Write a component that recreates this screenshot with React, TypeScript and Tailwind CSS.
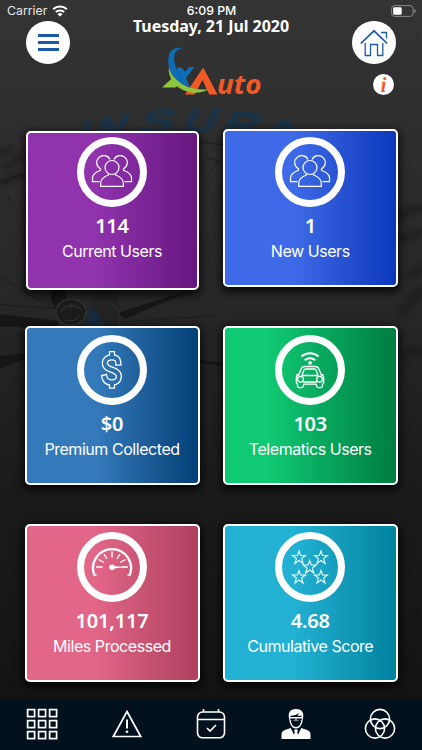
import type { ReactNode } from "react";

const LABEL = "font-['Inter','Liberation_Sans',sans-serif]";
const HUMANIST = "font-['Noto_Sans','Open_Sans',sans-serif]";

function Backdrop() {
  return (
    <svg className="absolute inset-0 h-full w-full" viewBox="0 0 422 750" aria-hidden="true">
      <defs>
        <linearGradient id="wall" x1="0" y1="0" x2="0" y2="1">
          <stop offset="0" stopColor="#343434" />
          <stop offset="0.12" stopColor="#303030" />
          <stop offset="0.4" stopColor="#272727" />
          <stop offset="0.65" stopColor="#1b1b1b" />
          <stop offset="1" stopColor="#111111" />
        </linearGradient>
        <filter id="soft"><feGaussianBlur stdDeviation="0.6" /></filter>
        <filter id="softer"><feGaussianBlur stdDeviation="2.5" /></filter>
      </defs>
      <rect width="422" height="750" fill="url(#wall)" />
      <g fill="#1f3245" stroke="#1f3245" strokeWidth="1.6" fontFamily="Liberation Sans, sans-serif" fontWeight="700" fontSize="34" filter="url(#soft)">
        <text transform="translate(77 147) rotate(-12) skewX(-28)">I</text>
        <text transform="translate(92 143) rotate(-8) skewX(-28) scale(1.25 1)">N</text>
        <text transform="translate(137 134) rotate(-4) skewX(-24) scale(1.5 .95)">S</text>
        <text transform="translate(180 133) rotate(-1) skewX(-24) scale(1.35 1)">U</text>
        <text transform="translate(219 135) rotate(4) skewX(-24) scale(1.4 1.05)">R</text>
        <text transform="translate(260 137) rotate(8) skewX(-20) scale(1.35 .85)">A</text>
        <text transform="translate(313 149) rotate(12) skewX(-18)">I</text>
      </g>
      <g filter="url(#softer)" fill="none" stroke="#191919" strokeWidth="6" opacity=".6">
        <path d="M-4 155L12 148M3 169l20-14M0 185q10-8 25-10" />
        <path d="M398 220q10-14 26-9M401 240l22-9M410 278l12-12M400 315l22-27M400 358q10-12 24-6" />
      </g>
      <g stroke="#1a1a1a" strokeWidth=".8" fill="none" filter="url(#soft)">
        <path d="M0 182L26 174M7 194l5 11M198 142l26 3M207 158l14 4M211 171l7-9" />
        <path d="M0 277L67 316M0 305L60 309M24 286L62 310M0 339L40 330M0 350L70 331M125 315L190 293M120 322L213 316M95 288L75 307M197 367l26 3" />
      </g>
      <g fill="#151515" filter="url(#soft)">
        <path d="M52 286h12l4 22-10 4-7-12zM118 313l81-26-74 32zM-2 314l60 7v8L-2 326zM0 356l30-3v4L0 369zM199 360l24 3v3l-24-3z" />
      </g>
      <path d="M89 317Q91 289 110 287l9 14v25H89z" fill="#222" filter="url(#soft)" />
      <path d="M93 306q10-9 23 1 6 8 2 19" fill="none" stroke="#2f2a2a" strokeWidth="1.4" />
      <path d="M89 307q10 3 15 19H86z" fill="#172a3e" />
      <ellipse cx="71" cy="312" rx="15" ry="13" fill="#1b1b1b" stroke="#333" strokeWidth="1.3" />
      <path d="M61 311q9-11 21-1m-17 10q10 3 14-4m-7-13-2 7" fill="none" stroke="#2d2d2d" strokeWidth="1.5" />
    </svg>
  );
}

function StatusBar() {
  return (
    <div className={`flex h-5 items-center justify-between pr-[6px] pl-[7px] pt-[2px] text-white ${LABEL}`}>
      <div className="flex flex-1 items-center gap-[5px] text-[12.3px] leading-none text-[#e8e8e8]">
        Carrier
        <svg className="h-[12px] w-[16px]" viewBox="0 0 16 12" fill="none" stroke="#fff" strokeWidth="2.1">
          <path d="M1.2 4.3a9.7 9.7 0 0 1 13.6 0M3.9 7.1a5.9 5.9 0 0 1 8.2 0" />
          <path d="M8 11.6 5.5 9.2a3.6 3.6 0 0 1 5 0z" fill="#fff" stroke="none" />
        </svg>
      </div>
      <div className="text-[12.3px] font-medium leading-none">6:09 PM</div>
      <div className="flex flex-1 justify-end">
        <svg className="h-[12px] w-[25px]" viewBox="0 0 25 12">
          <rect x=".6" y=".6" width="21.6" height="10.8" rx="3" fill="none" stroke="#8b8b8b" strokeWidth="1" />
          <rect x="2.2" y="2.2" width="8.5" height="7.6" rx="1.4" fill="#fff" />
          <path d="M23.4 4v4q1.4-.7 1.4-2t-1.4-2" fill="#8b8b8b" />
        </svg>
      </div>
    </div>
  );
}

function Logo() {
  return (
    <svg className="mt-[13px] ml-[5px] h-[50px] w-[104px] overflow-visible" viewBox="0 0 104 50" role="img" aria-label="xAuto">
      <path d="M41.200 20.500 55.500 47.500H47.300L40.500 33 32.500 47.500h-9.500z" fill="#f15a24" />
      <path d="M0 40.500 12 29.500l7 6-5.500 5z" fill="#8cc63f" />
      <path d="M7 20q4 15 21 20.500 8 3 19 1.500-10 6-22 2.500Q8 39 6.700 23z" fill="#8cc63f" />
      <path d="M20.500 1Q12 2.500 12 12q1 15 16 29Q4 31 6.500 10 9-1 20.500 1z" fill="#0f6db7" />
      <path d="M14.500 20.500h5l3.500 4.500 4-5h5.500L24 31l4 9.500Q17 33 14.500 20.500z" fill="#0f6db7" />
      <text x="55" y="47.300" textLength="44.500" lengthAdjust="spacingAndGlyphs" fill="#f15a24" fontFamily="Open Sans, Noto Sans, sans-serif" fontWeight="700" fontStyle="italic" fontSize="27.500">uto</text>
    </svg>
  );
}

function Header() {
  return (
    <header className="flex h-[84px] items-start justify-between pr-[26px] pl-[26px]">
      <button className="mt-px flex h-[43px] w-[44px] flex-col items-center justify-center gap-[4px] rounded-full bg-white">
        <span className="h-[3px] w-[21px] bg-[#1b5aa6]" />
        <span className="h-[3px] w-[21px] bg-[#1b5aa6]" />
        <span className="h-[3px] w-[21px] bg-[#1b5aa6]" />
      </button>
      <div className="flex flex-col items-center">
        <div className={`h-[14px] whitespace-nowrap text-[16px] font-bold leading-[13px] tracking-[-0.050px] text-white ${HUMANIST}`}>
          Tuesday, 21 Jul 2020
        </div>
        <Logo />
      </div>
      <div className="flex flex-col items-end">
        <button className="mt-px flex h-[43px] w-[44px] items-center justify-center rounded-full bg-white">
          <svg className="h-[28px] w-[28px]" viewBox="0 0 28 28" fill="none" stroke="#1b5aa6" strokeWidth="1.300">
            <path d="M.8 14.500 14 1.800l13.200 12.700" strokeWidth="1.700" />
            <path d="M5.200 14v12.500h5.300v-11h7v11h5.300V14" />
            <path d="M21 3.500h5.500v6" />
          </svg>
        </button>
        <div className="mt-[10px] mr-[2px] flex h-[21px] w-[21px] items-center justify-center rounded-full bg-white font-['Liberation_Serif',serif] text-[20px] font-bold italic leading-none text-[#f15a24]">
          i
        </div>
      </div>
    </header>
  );
}

function UsersIcon() {
  return (
    <svg className="h-[42px] w-[42px]" viewBox="0 0 42 42" fill="none" stroke="#fff" strokeWidth="1.200">
      <circle cx="21" cy="16.500" r="7" />
      <path d="M17.300 22.500v1.500Q9.700 27 9.700 32v3.300h22.600V32q0-5-7.600-8v-1.500" />
      <path d="M19 8.500a7 7 0 1 0-9.500 9.300v1.500Q1.500 22.500 1.500 27v3.700h7" />
      <path d="M23 8.500a7 7 0 1 1 9.500 9.300v1.500q8 3.200 8 7.700v3.700h-7" />
    </svg>
  );
}

function DollarIcon() {
  const body = "M18.600 12.500C18.300 9.200 16 7.200 12 7.200S4.500 9.500 4.500 13c0 8.500 14.700 5.300 14.700 13.300 0 4-3 6.300-7.200 6.300-4 0-7-1.800-7.800-5M12 7V4.300M12 33v2.500";
  return (
    <svg className="h-[40px] w-[24px]" viewBox="0 0 24 40" fill="none">
      <mask id="hollow" maskUnits="userSpaceOnUse" x="0" y="0" width="24" height="40">
        <path d={body} stroke="#fff" strokeWidth="6.600" strokeLinecap="square" transform="translate(.6 0) scale(.95 1)" />
        <path d={body} stroke="#000" strokeWidth="4" strokeLinecap="square" transform="translate(.6 0) scale(.95 1)" />
      </mask>
      <rect width="24" height="40" fill="#fff" mask="url(#hollow)" />
    </svg>
  );
}

function CarIcon() {
  return (
    <svg className="h-[40px] w-[32px]" viewBox="0 0 32 40" fill="none" stroke="#fff" strokeWidth="1.300" strokeLinejoin="round">
      <path d="M7.400 6.600a12.800 12.800 0 0 1 17.200 0M10.700 10.200a8 8 0 0 1 10.600 0" strokeWidth="2" />
      <circle cx="16" cy="12.800" r="1.900" fill="#fff" stroke="none" />
      <path d="m4.500 25.500 2.700-6.700Q8 16.500 11 16.500h10q3 0 3.800 2.300l2.700 6.700M8 25.500h16l-1.800-5q-.5-1.500-2-1.500h-8.400q-1.500 0-2 1.500z" />
      <path d="M4.500 25.500 2 24.500M27.500 25.500l2.500-1M5 25q-2.700 0-2.700 3v4.500q1.500 1.700 1.500 4 0 1.200 1.500 1.200h2q1.600 0 2-1.500l.5-2h12.400l.5 2q.4 1.500 2 1.500h2q1.500 0 1.500-1.200 0-2.300 1.500-4V28q0-3-2.700-3M9 32h14" />
      <circle cx="6.500" cy="29.200" r="2.900" /><circle cx="25.500" cy="29.200" r="2.900" />
    </svg>
  );
}

function GaugeIcon() {
  return (
    <svg className="h-[42px] w-[42px]" viewBox="0 0 42 42" fill="none" stroke="#fff" strokeWidth="1.400">
      <path d="M3.300 29A19 19 0 1 1 38.700 29" strokeWidth="2.300" />
      <path d="M2.500 29h3M36.500 29h3" strokeWidth="1.300" />
      <path d="M5 21h6.500M7.500 13.500l5.500 3M13 8l3 5M21 5.500v6M29 8l-3 5M34.500 13.500l-5.500 3M30.500 21H37" />
      <circle cx="21" cy="21.300" r="2.800" fill="#fff" stroke="none" />
      <path d="m21 20 10 .7v.8l-10 1.200z" fill="#fff" stroke="none" />
    </svg>
  );
}

function StarsIcon() {
  const spots = [[10, 11.500], [32, 11.500], [20.700, 21], [10, 31], [32, 31]];
  return (
    <svg className="h-[42px] w-[42px]" viewBox="0 0 42 42" fill="none" stroke="#e8fbff" strokeWidth="1.100">
      {spots.map(([x, y]) => (
        <path key={`${x}-${y}`} transform={`translate(${x} ${y})`} d="M0-6.500 1.600-2H6.500L2.600 1 4.100 6 0 3-4.100 6-2.600 1-6.500-2h4.900z" />
      ))}
    </svg>
  );
}

type CardProps = { value: string; label: string; tone: string; box: string; inner: string; icon: ReactNode };

function Card({ value, label, tone, box, inner, icon }: CardProps) {
  return (
    <section className={`rounded-[5px] border-[2.500px] border-white shadow-[0_3px_8px_2px_rgba(0,0,0,0.75)] ${tone} ${box}`}>
      <div className={`flex flex-col items-center text-white ${inner}`}>
        <div className="flex h-[70px] w-[70px] items-center justify-center rounded-full border-[7px] border-white">{icon}</div>
        <div className={`mt-[5px] text-[20px] font-semibold leading-[28px] tracking-[-0.200px] ${HUMANIST}`}>{value}</div>
        <div className={`whitespace-nowrap text-[16px] leading-[22px] tracking-[-0.450px] ${LABEL}`}>{label}</div>
      </div>
    </section>
  );
}

function Dashboard() {
  return (
    <main className="flex flex-1 flex-col">
      <div className="flex h-[197px] items-start pt-[24.500px] pl-[25.500px]">
        <Card value="114" label="Current Users" icon={<UsersIcon />} tone="bg-linear-to-r from-[#9033ad] from-40% to-[#661681]" box="mt-[2px] h-[159px] w-[173px]" inner="pt-[4.500px]" />
        <Card value="1" label="New Users" icon={<UsersIcon />} tone="bg-linear-to-r from-[#3e6ae7] from-40% to-[#0b37bc]" box="ml-[24.500px] h-[158.500px] w-[174.500px]" inner="pt-[6.500px]" />
      </div>
      <div className="flex h-[197.500px] items-start pt-[25px] pl-[24.500px]">
        <Card value="$0" label="Premium Collected" icon={<DollarIcon />} tone="bg-linear-to-r from-[#347abb] from-40% to-[#034077]" box="h-[158.500px] w-[175px]" inner="pt-[6.500px]" />
        <Card value="103" label="Telematics Users" icon={<CarIcon />} tone="bg-linear-to-r from-[#10ca73] from-25% to-[#007d42]" box="ml-[23.500px] h-[158.500px] w-[174.500px]" inner="pt-[6.500px]" />
      </div>
      <div className="flex items-start pt-[25px] pl-[24.500px]">
        <Card value="101,117" label="Miles Processed" icon={<GaugeIcon />} tone="bg-linear-to-r from-[#e26688] from-40% to-[#ad405e]" box="h-[158.500px] w-[175px]" inner="pt-[6.500px]" />
        <Card value="4.68" label="Cumulative Score" icon={<StarsIcon />} tone="bg-linear-to-r from-[#22b1d3] from-40% to-[#00829f]" box="ml-[23.500px] h-[158.500px] w-[174.500px]" inner="pt-[6.500px]" />
      </div>
    </main>
  );
}

function NavBar() {
  const cells = [0, 11, 22];
  return (
    <nav className="flex h-[51.500px] items-center justify-between bg-[#03111f] px-[26px]">
      <svg className="h-[32px] w-[32px]" viewBox="0 0 32 32" fill="none" stroke="#fff" strokeWidth="1.700">
        {cells.flatMap((x) => cells.map((y) => <rect key={`${x}-${y}`} x={x + 1.600} y={y + 1.600} width="7" height="7" />))}
      </svg>
      <svg className="h-[32px] w-[32px]" viewBox="0 0 32 32" fill="none" stroke="#fff" strokeWidth="1.700">
        <path d="M16 3.500 29.700 28.500H2.300z" />
        <path d="M16 11.500v9" strokeWidth="2" /><circle cx="16" cy="23.800" r="1.300" fill="#fff" stroke="none" />
      </svg>
      <svg className="h-[32px] w-[32px]" viewBox="0 0 32 32" fill="none" stroke="#fff" strokeWidth="1.600">
        <rect x="2.500" y="4" width="27" height="25.800" rx="5" />
        <path d="M2.500 11.500h27M8.500 1v3M23.500 1v3M12 20l3 3 6-6" />
      </svg>
      <svg className="h-[32px] w-[32px]" viewBox="0 0 32 32" fill="#fff">
        <path d="M9.300 12C7.500 4.500 10 1 16 1c6.500 0 8.500 4 6.700 11l-.6 3Q20 20.500 16 20.500T9.900 15z" />
        <path d="M10.800 12.800h4.400l.8-.8.800.8h4.400q-.7 5.900-5.200 6.200-4.500-.3-5.200-6.200z" fill="#03111f" />
        <path d="M10.500 7.800q5.500-.2 8.500-3l-1.500 3h4v1.200h-11z" fill="#03111f" />
        <path d="M10 10.500h5.300l.7.600.7-.6H22l-.4 1.500q-.6 1-2.300 1-1.800 0-2.300-1.400h-2Q14.500 13 12.700 13q-1.700 0-2.300-1z" fill="#03111f" />
        <path d="M1.500 31v-4.500Q1.500 23 5 22l5.700-2 5.300 11 5.300-11 5.700 2q3.500 1 3.500 4.500V31z" />
        <path d="m14 22 2-.7 2 .7-.8 2L18.500 29 16 31l-2.500-2 1.300-5z" />
      </svg>
      <svg className="h-[32px] w-[32px]" viewBox="0 0 32 32" fill="none" stroke="#fff" strokeWidth="1.600">
        <circle cx="16" cy="11" r="9.600" /><circle cx="11" cy="20.500" r="9.600" /><circle cx="21" cy="20.500" r="9.600" />
      </svg>
    </nav>
  );
}

export default function App() {
  return (
    <div className="relative h-[750px] w-[422px] overflow-hidden bg-[#222]">
      <Backdrop />
      <div className="relative flex h-full flex-col">
        <StatusBar />
        <Header />
        <Dashboard />
        <NavBar />
      </div>
    </div>
  );
}
